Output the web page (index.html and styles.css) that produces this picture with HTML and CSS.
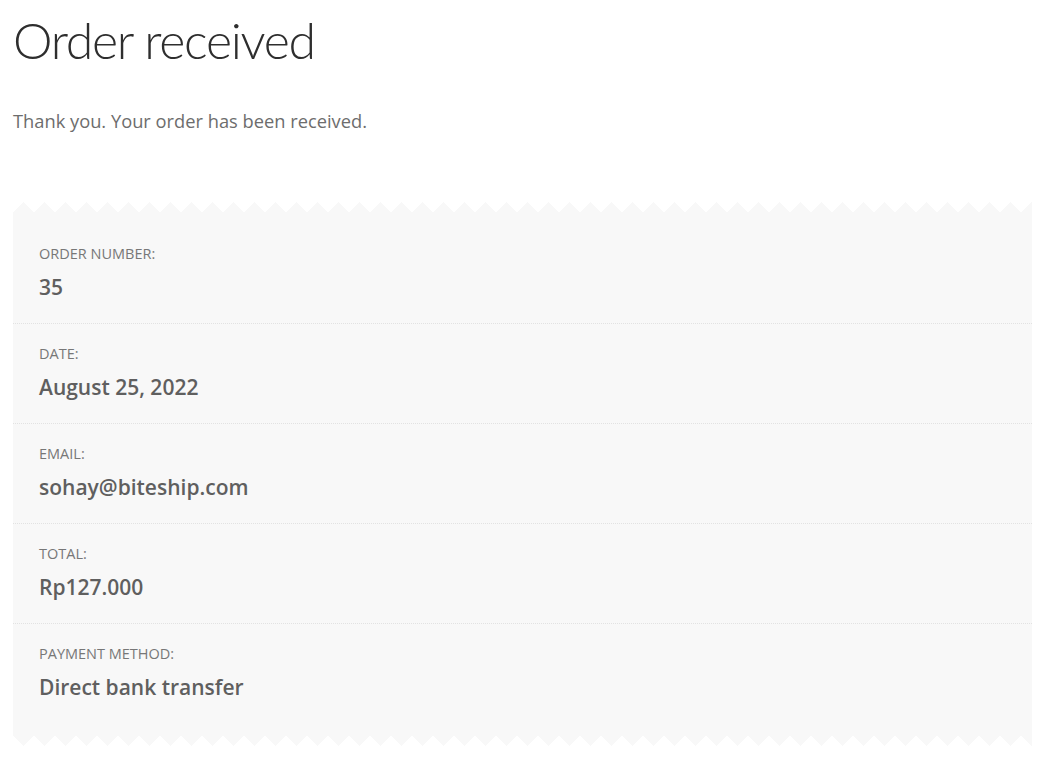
FILE: index.html
```html
<!DOCTYPE html>
<html lang="en">
<head>
  <meta charset="UTF-8">
  <meta name="viewport" content="width=device-width, initial-scale=1.0">
  <title>Order received</title>
  <link rel="stylesheet" href="styles.css">
</head>
<body>
  <div class="page">
    <h1 class="page-title">Order received</h1>
    <p class="thankyou">Thank you. Your order has been received.</p>

    <div class="order-details">
      <ul class="order-list">
        <li class="order-item">
          <span class="order-label">Order number:</span>
          <strong class="order-value">35</strong>
        </li>
        <li class="order-item">
          <span class="order-label">Date:</span>
          <strong class="order-value">August 25, 2022</strong>
        </li>
        <li class="order-item">
          <span class="order-label">Email:</span>
          <strong class="order-value">sohay@biteship.com</strong>
        </li>
        <li class="order-item">
          <span class="order-label">Total:</span>
          <strong class="order-value">Rp127.000</strong>
        </li>
        <li class="order-item">
          <span class="order-label">Payment method:</span>
          <strong class="order-value">Direct bank transfer</strong>
        </li>
      </ul>
    </div>
  </div>
</body>
</html>
```

FILE: styles.css
```css
body {
  margin: 0;
  background-color: #fff;
  font-family: "Open Sans", "Liberation Sans", sans-serif;
  color: #6d6d6d;
}
.page {
  padding: 8px 18px 0 13px;
}
.page-title {
  margin: 0;
  font-family: Lato, "Open Sans", sans-serif;
  font-size: 50px;
  font-weight: 300;
  letter-spacing: -1.3px;
  line-height: 64px;
  color: #2e2e2e;
}
.thankyou {
  margin: 35px 0 67px;
  font-size: 18.3px;
  line-height: 28px;
  color: #6d6d6d;
}

/* ====== zigzag panel ====== */
.order-details::before,
.order-details::after {
  content: "";
  display: block;
  height: 10px;
  background-repeat: repeat-x;
  background-size: 21px 10px;
}
.order-details::before {
  background-image: conic-gradient(from 135deg at 50% 0, #f8f8f8 90deg, transparent 0);
}
.order-details::after {
  background-image: conic-gradient(from -45deg at 50% 100%, #f8f8f8 90deg, transparent 0);
}
.order-list {
  list-style: none;
  margin: 0;
  padding: 12px 0 13px;
  background-color: #f8f8f8;
}
.order-item {
  display: flex;
  flex-direction: column;
  padding: 20px 26px 21px;
  border-bottom: 1px dotted #e2e2e2;
}
.order-item:last-child {
  border-bottom: none;
}
.order-label {
  font-size: 14.5px;
  line-height: 20px;
  text-transform: uppercase;
  color: #777;
  margin-bottom: 8px;
}
.order-value {
  font-size: 21px;
  line-height: 30px;
  font-weight: 600;
  color: #5f5f5f;
}
```
